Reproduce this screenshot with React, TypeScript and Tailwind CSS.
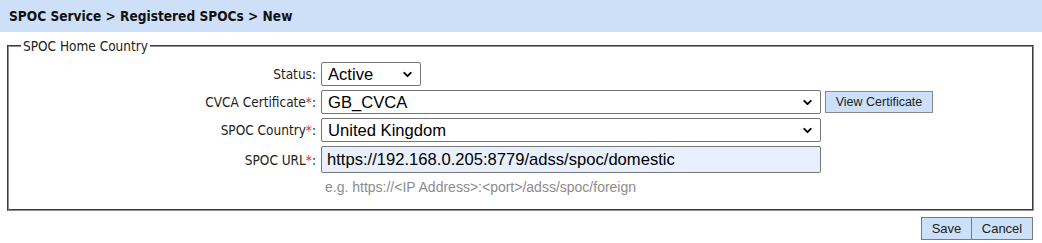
import { ChevronDown } from "lucide-react";

const tahoma = "font-['DejaVu_Sans_Condensed','DejaVu_Sans',sans-serif]";
const arial = "font-['Liberation_Sans',Arial,sans-serif]";

function Select({ value, width }: { value: string; width: string }) {
  return (
    <div className={`relative h-[24px] ${width}`}>
      <select
        defaultValue={value}
        className={`h-full w-full appearance-none rounded-[2px] border border-[#767676] bg-white pl-[6px] text-[16.6px] text-black ${arial}`}
      >
        <option>{value}</option>
      </select>
      <ChevronDown
        className="pointer-events-none absolute right-[7px] top-[6px] h-[13px] w-[13px] text-black"
        strokeWidth={3.5}
      />
    </div>
  );
}

function Row({ label, required, children }: { label: string; required?: boolean; children: React.ReactNode }) {
  return (
    <div className="flex items-center">
      <div className={`w-[307px] text-right text-[13.5px] text-[#222] ${tahoma}`}>
        {label}
        {required && <span className="text-[#e03030]">*</span>}:
      </div>
      <div className="ml-[5px] flex items-center">{children}</div>
    </div>
  );
}

export default function App() {
  return (
    <div className="h-[243px] w-[1042px] bg-white">
      <div className={`flex h-[32px] items-center bg-[#cee0f8] pl-[9px] text-[13.6px] font-bold text-[#111] ${tahoma}`}>
        SPOC Service &gt; Registered SPOCs &gt; New
      </div>

      <fieldset className="mx-[7px] mt-[4px] mr-[8px] h-[175px] border-2 border-[#909090] px-0 pb-0 pt-[6px] [border-style:groove]">
        <legend className={`ml-[12px] px-[2px] text-[13.5px] text-[#222] ${tahoma}`}>SPOC Home Country</legend>

        <div className="flex flex-col gap-[4px]">
          <Row label="Status">
            <Select value="Active" width="w-[100px]" />
          </Row>
          <Row label="CVCA Certificate" required>
            <Select value="GB_CVCA" width="w-[500px]" />
            <button
              className={`ml-[4px] h-[22px] w-[108px] border border-[#8a8a8a] bg-[#cde0fa] text-[12.5px] text-[#222] ${arial}`}
            >
              View Certificate
            </button>
          </Row>
          <Row label="SPOC Country" required>
            <Select value="United Kingdom" width="w-[500px]" />
          </Row>
          <Row label="SPOC URL" required>
            <input
              defaultValue="https://192.168.0.205:8779/adss/spoc/domestic"
              className={`h-[27px] w-[500px] rounded-[2px] border border-[#767676] bg-[#e8f0fe] pl-[5px] text-[16.6px] text-black ${arial}`}
            />
          </Row>
          <div className={`ml-[316px] text-[14px] text-[#8c8c8c] ${arial}`}>
            e.g. https://&lt;IP Address&gt;:&lt;port&gt;/adss/spoc/foreign
          </div>
        </div>
      </fieldset>

      <div className={`mr-[9px] mt-[6px] flex justify-end text-[13px] text-[#222] ${arial}`}>
        <button className="h-[23px] w-[51px] border border-[#7a7a7a] bg-[#cde0fa]">Save</button>
        <button className="h-[23px] w-[61px] border border-l-0 border-[#7a7a7a] bg-[#cde0fa]">Cancel</button>
      </div>
    </div>
  );
}
